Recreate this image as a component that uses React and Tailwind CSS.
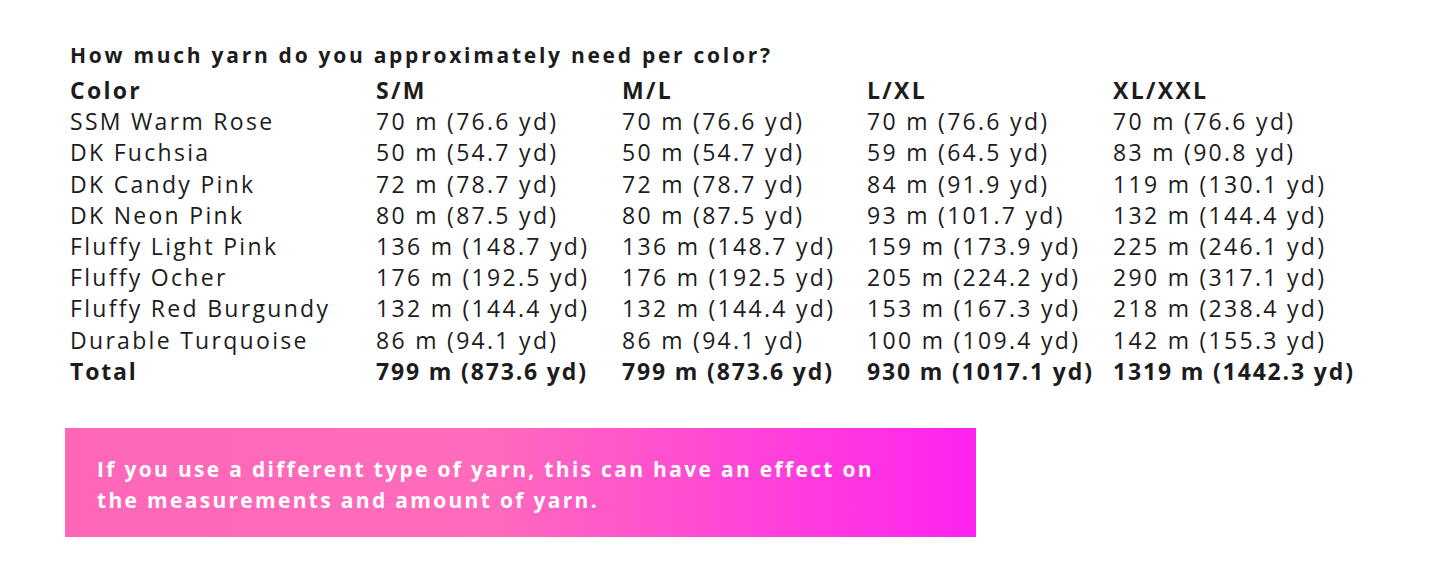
const sizes = ["S/M", "M/L", "L/XL", "XL/XXL"];

const rows = [
  ["SSM Warm Rose", "70 m (76.6 yd)", "70 m (76.6 yd)", "70 m (76.6 yd)", "70 m (76.6 yd)"],
  ["DK Fuchsia", "50 m (54.7 yd)", "50 m (54.7 yd)", "59 m (64.5 yd)", "83 m (90.8 yd)"],
  ["DK Candy Pink", "72 m (78.7 yd)", "72 m (78.7 yd)", "84 m (91.9 yd)", "119 m (130.1 yd)"],
  ["DK Neon Pink", "80 m (87.5 yd)", "80 m (87.5 yd)", "93 m (101.7 yd)", "132 m (144.4 yd)"],
  ["Fluffy Light Pink", "136 m (148.7 yd)", "136 m (148.7 yd)", "159 m (173.9 yd)", "225 m (246.1 yd)"],
  ["Fluffy Ocher", "176 m (192.5 yd)", "176 m (192.5 yd)", "205 m (224.2 yd)", "290 m (317.1 yd)"],
  ["Fluffy Red Burgundy", "132 m (144.4 yd)", "132 m (144.4 yd)", "153 m (167.3 yd)", "218 m (238.4 yd)"],
  ["Durable Turquoise", "86 m (94.1 yd)", "86 m (94.1 yd)", "100 m (109.4 yd)", "142 m (155.3 yd)"],
];

const total = ["Total", "799 m (873.6 yd)", "799 m (873.6 yd)", "930 m (1017.1 yd)", "1319 m (1442.3 yd)"];

export default function App() {
  return (
    <div className="min-h-[568px] bg-white text-[#1c1c1c] font-['Open_Sans',sans-serif] pl-[70px] pt-[41px]">
      <h2 className="text-[21px] leading-[28px] font-bold tracking-[0.13em]">
        How much yarn do you approximately need per color?
      </h2>

      <div className="grid grid-cols-[306px_246px_245px_246px_auto] text-[23px] leading-[31.2px] tracking-[0.1em] mt-[6px]">
        <div className="font-bold">Color</div>
        {sizes.map((s) => (
          <div key={s} className="font-bold">{s}</div>
        ))}

        {rows.map((r) =>
          r.map((cell, i) => (
            <div key={r[0] + i} className="whitespace-nowrap">{cell}</div>
          ))
        )}

        {total.map((cell, i) => (
          <div key={"t" + i} className="font-bold whitespace-nowrap tracking-[0.08em]">{cell}</div>
        ))}
      </div>

      <div className="mt-[41px] -ml-[5px] w-[911px] h-[109px] bg-[linear-gradient(to_right,#ff66b8,#ff6cba_45%,#ff22f0)] px-[32px] pt-[26px]">
        <p className="text-white font-bold text-[21px] leading-[31px] tracking-[0.11em] whitespace-nowrap">
          If you use a different type of yarn, this can have an effect on
          <br />
          the measurements and amount of yarn.
        </p>
      </div>
    </div>
  );
}
